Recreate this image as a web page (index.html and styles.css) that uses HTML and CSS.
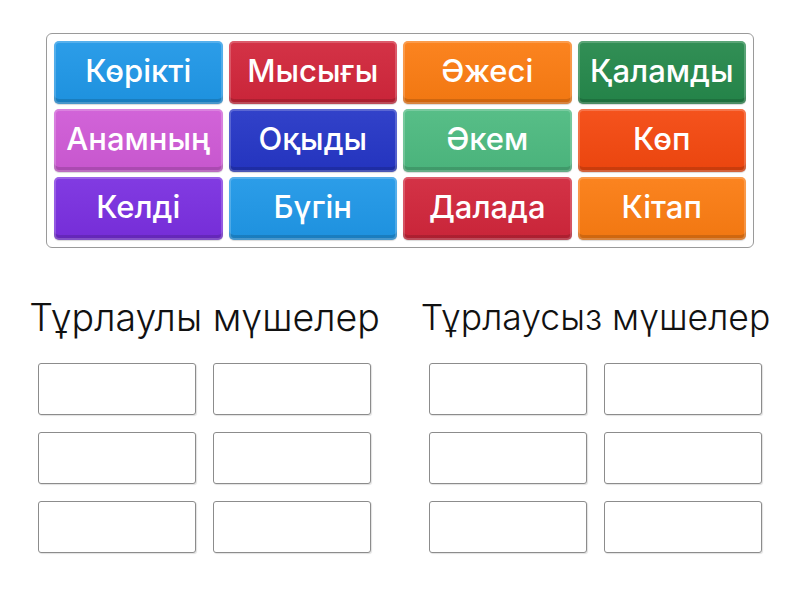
FILE: index.html
```html
<!DOCTYPE html>
<html lang="kk">
<head>
<meta charset="utf-8">
<title>Group sort</title>
<link rel="stylesheet" href="styles.css">
</head>
<body>
<div class="board">
  <div class="tile c-blue">Көрікті</div>
  <div class="tile c-red">Мысығы</div>
  <div class="tile c-orange">Әжесі</div>
  <div class="tile c-green">Қаламды</div>
  <div class="tile c-pink">Анамның</div>
  <div class="tile c-navy">Оқыды</div>
  <div class="tile c-mint">Әкем</div>
  <div class="tile c-flame">Көп</div>
  <div class="tile c-purple">Келді</div>
  <div class="tile c-blue">Бүгін</div>
  <div class="tile c-red">Далада</div>
  <div class="tile c-orange">Кітап</div>
</div>
<div class="groups">
  <section class="group">
    <h2 class="group-title">Тұрлаулы мүшелер</h2>
    <div class="slots">
      <div class="slot"></div><div class="slot"></div>
      <div class="slot"></div><div class="slot"></div>
      <div class="slot"></div><div class="slot"></div>
    </div>
  </section>
  <section class="group">
    <h2 class="group-title group-title-fit">Тұрлаусыз мүшелер</h2>
    <div class="slots">
      <div class="slot"></div><div class="slot"></div>
      <div class="slot"></div><div class="slot"></div>
      <div class="slot"></div><div class="slot"></div>
    </div>
  </section>
</div>
</body>
</html>
```
FILE: styles.css
```css
html, body {
  margin: 0;
  padding: 0;
  background: #fff;
  font-family: Inter, "Noto Sans", sans-serif;
}
body {
  width: 800px;
  height: 600px;
  overflow: hidden;
}
.board {
  box-sizing: border-box;
  margin: 33px 0 0 46px;
  width: 708px;
  height: 215px;
  border: 1px solid #9a9a9a;
  border-radius: 6px;
  padding: 7px;
  display: grid;
  grid-template-columns: repeat(4, 1fr);
  grid-template-rows: repeat(3, 63px);
  column-gap: 6px;
  row-gap: 5px;
}
.tile {
  display: flex;
  align-items: center;
  justify-content: center;
  padding-bottom: 4px;
  box-sizing: border-box;
  border-radius: 5px;
  color: #fff;
  font-size: 31px;
  font-weight: 500;
  background-image: linear-gradient(rgba(255,255,255,0.06), rgba(0,0,0,0.04));
  box-shadow: inset 0 0 0 2px rgba(255,255,255,0.2), inset 0 -5px 0 rgba(0,0,0,0.14), 0 1px 1px rgba(0,0,0,0.15);
}
.c-blue { background-color: #1f97e7; }
.c-red { background-color: #d1263b; }
.c-orange { background-color: #fb7c12; }
.c-green { background-color: #25884b; }
.c-pink { background-color: #cf5ad6; }
.c-navy { background-color: #2536c6; }
.c-mint { background-color: #4dba80; }
.c-flame { background-color: #f4480f; }
.c-purple { background-color: #7a2fe0; }

.groups {
  display: flex;
  gap: 58px;
  padding-left: 38px;
  margin-top: 47px;
}
.group {
  width: 333px;
}
.group-title {
  margin: 0 -30px 23px;
  text-align: center;
  font-size: 37.5px;
  line-height: 45px;
  font-weight: 300;
  color: #111;
  white-space: nowrap;
}
.group-title-fit {
  font-size: 35.5px;
}
.slots {
  display: grid;
  grid-template-columns: 158px 158px;
  grid-auto-rows: 52px;
  column-gap: 17px;
  row-gap: 17px;
}
.slot {
  box-sizing: border-box;
  border: 1px solid #8c8c8c;
  border-radius: 3px;
  background: #fff;
  box-shadow: 1px 1px 1px rgba(0,0,0,0.12);
}
```
